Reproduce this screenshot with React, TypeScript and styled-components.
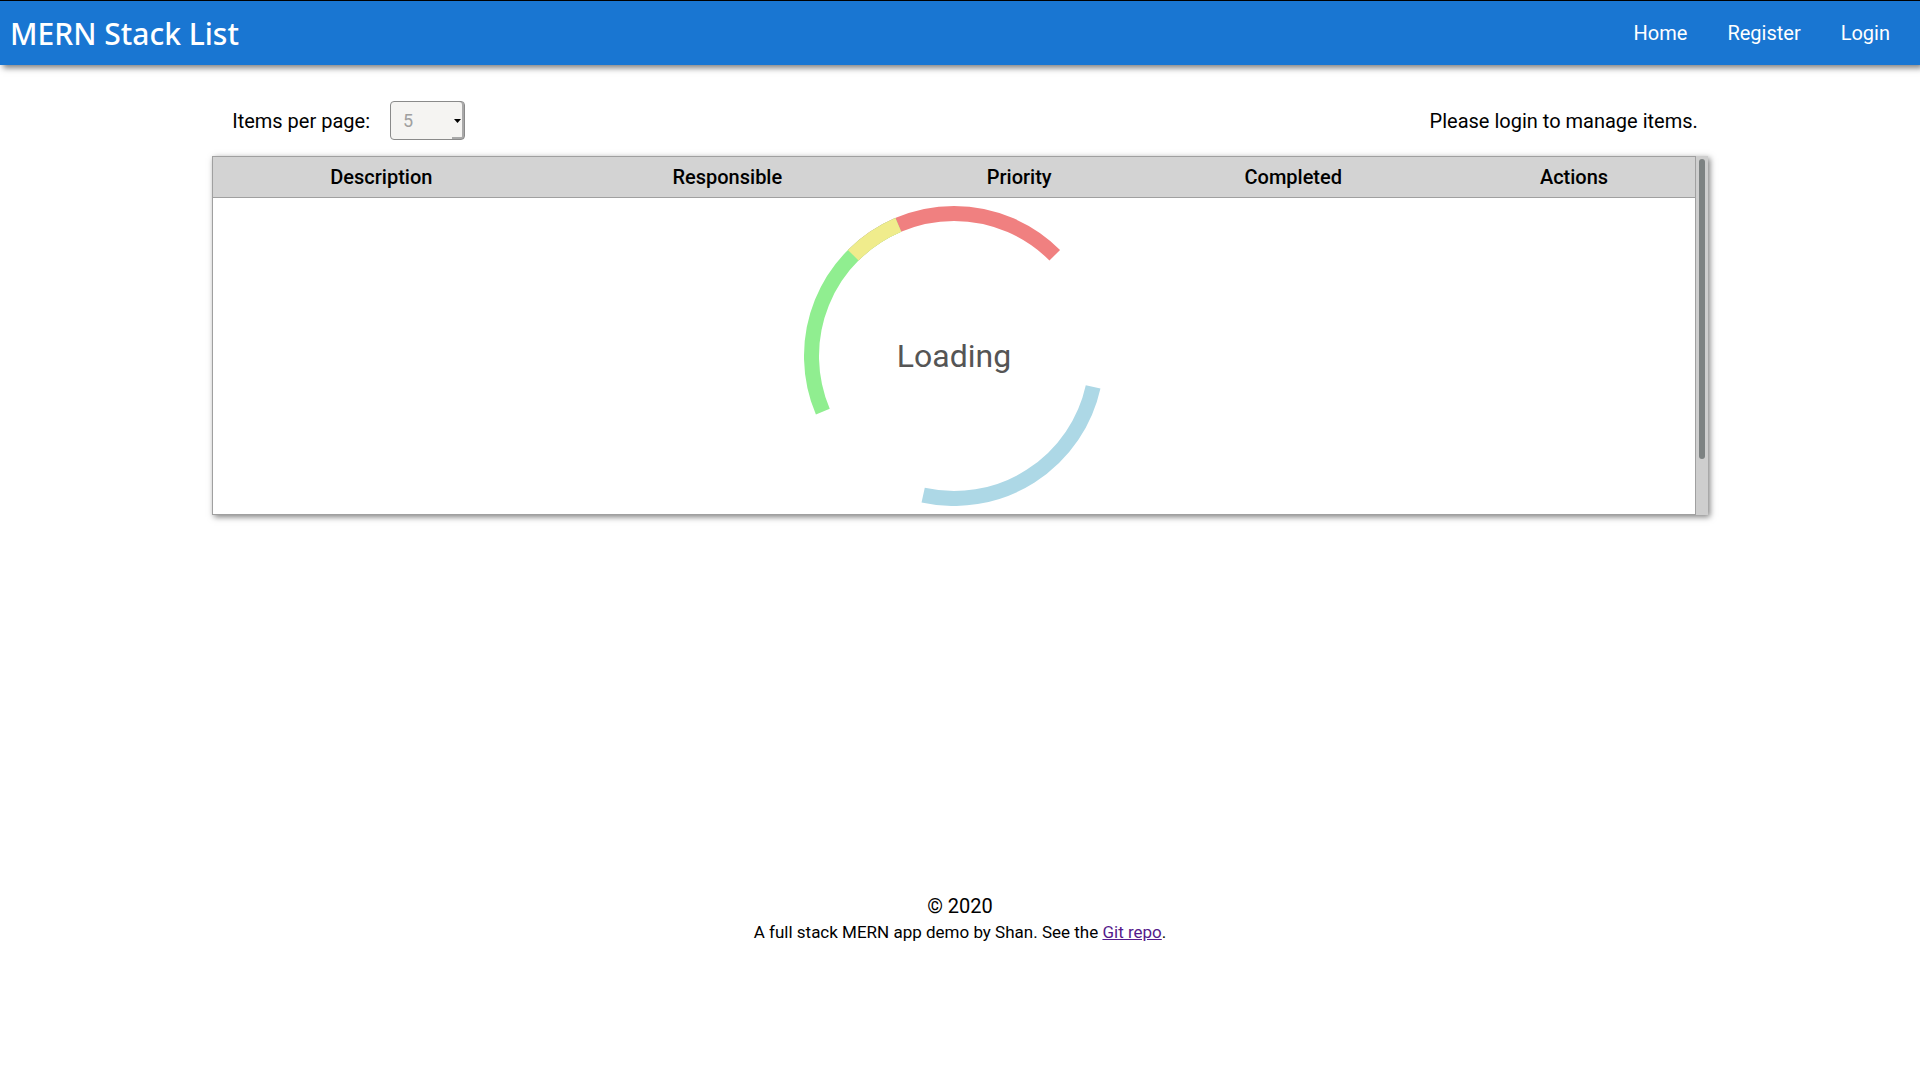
import React from "react";
import styled, { createGlobalStyle } from "styled-components";

const GlobalStyle = createGlobalStyle`
  * { box-sizing: border-box; }
  html { height: 100%; }
  body {
    margin: 0;
    background: #fff;
    color: #000;
    font: 20px/24px Roboto, sans-serif;
  }
`;

const NavBar = styled.header`
  display: flex;
  align-items: center;
  justify-content: space-between;
  height: 65px;
  padding: 0 14px 0 10px;
  border-top: 1px solid #000;
  background: #1976d2;
  box-shadow: 3px 3px 6px rgba(0, 0, 0, 0.5);
`;

const Brand = styled.h1`
  margin: 0;
  padding-top: 2px;
  color: #fff;
  font: 500 30px/36px "Noto Sans", sans-serif;
`;

const NavLinks = styled.nav`
  display: flex;
`;

const NavLink = styled.a`
  padding: 8px 16px 8px 24px;
  color: #fff;
  text-decoration: none;
`;

const Main = styled.main`
  width: 78%;
  min-height: 818px;
  margin: 0 auto;
  padding: 36px 1px 0;
`;

const Toolbar = styled.div`
  display: flex;
  align-items: center;
  justify-content: space-between;
  padding: 0 10px 0 20px;
`;

const PageSize = styled.div`
  display: flex;
  align-items: center;
  gap: 20px;
`;

const SelectBox = styled.div`
  position: relative;
`;

const PageSelect = styled.select`
  display: block;
  appearance: none;
  width: 75px;
  height: 39px;
  padding: 0 12px;
  border: 1px solid #8a8a8a;
  border-radius: 4px;
  background: linear-gradient(#a9a9a9, #a9a9a9) right bottom / 12px 2px no-repeat #f5f4f2;
  box-shadow: inset -2px 0 0 #a9a9a9;
  color: #a0a0a0;
  font: 18px/20px Roboto, sans-serif;
  opacity: 1;
`;

const Caret = styled.svg`
  position: absolute;
  top: 18px;
  right: 4px;
  pointer-events: none;
`;

const Panel = styled.section`
  display: flex;
  margin-top: 16px;
  background: #cecece;
  box-shadow: 2px 2px 6px rgba(0, 0, 0, 0.5);
`;

const TableFrame = styled.div`
  flex: 1;
  border: 1px solid #a0a0a0;
  background: #fff;
`;

const Track = styled.div`
  width: 12px;
  padding: 3px;
`;

const Thumb = styled.div`
  width: 6px;
  height: 300px;
  border-radius: 3px;
  background: #7d8282;
`;

const ItemTable = styled.table`
  width: 100%;
  border-collapse: collapse;
  table-layout: fixed;
`;

const HeadCell = styled.th<{ $share: number }>`
  width: ${(p) => p.$share}%;
  height: 40px;
  padding: 0;
  border-bottom: 1px solid #a0a0a0;
  background: #d3d3d3;
  font-weight: 500;
`;

const LoadingCell = styled.td`
  padding: 8px 0;
`;

const Spinner = styled.svg`
  display: block;
  width: 300px;
  height: 300px;
`;

const SpinnerBox = styled.div`
  display: grid;
  width: 300px;
  margin: 0 auto;
  place-items: center;
  & > * { grid-area: 1 / 1; }
`;

const LoadingText = styled.span`
  color: #555;
  font-size: 32px;
  line-height: 40px;
`;

const Footer = styled.footer`
  display: flex;
  flex-direction: column;
  align-items: center;
  padding-top: 11px;
`;

const FootNote = styled.small`
  font-size: 17px;
  line-height: 28px;
`;

const RepoLink = styled.a`
  color: #551a8b;
`;

const columns = [
  { name: "Description", share: 22.7 },
  { name: "Responsible", share: 24 },
  { name: "Priority", share: 15.4 },
  { name: "Completed", share: 21.6 },
  { name: "Actions", share: 16.3 },
];

const arcs = [
  { color: "#f08080", from: 225, to: 315 },
  { color: "#90ee90", from: 157, to: 247 },
  { color: "#f0ec8c", from: 225, to: 247 },
  { color: "#add8e6", from: 12.5, to: 102.5 },
];

function arcPath(from: number, to: number) {
  const r = 142.5;
  const at = (deg: number) => {
    const a = (deg * Math.PI) / 180;
    return `${150 + r * Math.cos(a)} ${150 + r * Math.sin(a)}`;
  };
  return `M${at(from)} A${r} ${r} 0 0 1 ${at(to)}`;
}

export default function App() {
  return (
    <>
      <GlobalStyle />
      <NavBar>
        <Brand>MERN Stack List</Brand>
        <NavLinks>
          <NavLink href="#home">Home</NavLink>
          <NavLink href="#register">Register</NavLink>
          <NavLink href="#login">Login</NavLink>
        </NavLinks>
      </NavBar>
      <Main>
        <Toolbar>
          <PageSize>
            <label htmlFor="page-size">Items per page:</label>
            <SelectBox>
              <PageSelect id="page-size" disabled defaultValue="5">
                <option value="5">5</option>
              </PageSelect>
              <Caret width="7" height="4" viewBox="0 0 7 4" aria-hidden="true">
                <path d="M0 0H7L3.5 4Z" />
              </Caret>
            </SelectBox>
          </PageSize>
          <span>Please login to manage items.</span>
        </Toolbar>
        <Panel>
          <TableFrame>
            <ItemTable>
              <thead>
                <tr>
                  {columns.map((c) => (
                    <HeadCell key={c.name} $share={c.share} scope="col">
                      {c.name}
                    </HeadCell>
                  ))}
                </tr>
              </thead>
              <tbody>
                <tr>
                  <LoadingCell colSpan={columns.length}>
                    <SpinnerBox role="status">
                      <Spinner viewBox="0 0 300 300" aria-hidden="true">
                        {arcs.map((a) => (
                          <path
                            key={a.color}
                            d={arcPath(a.from, a.to)}
                            fill="none"
                            stroke={a.color}
                            strokeWidth="15"
                          />
                        ))}
                      </Spinner>
                      <LoadingText>Loading</LoadingText>
                    </SpinnerBox>
                  </LoadingCell>
                </tr>
              </tbody>
            </ItemTable>
          </TableFrame>
          <Track>
            <Thumb />
          </Track>
        </Panel>
      </Main>
      <Footer>
        <span>© 2020</span>
        <FootNote>
          A full stack MERN app demo by Shan. See the <RepoLink href="#repo">Git repo</RepoLink>.
        </FootNote>
      </Footer>
    </>
  );
}
